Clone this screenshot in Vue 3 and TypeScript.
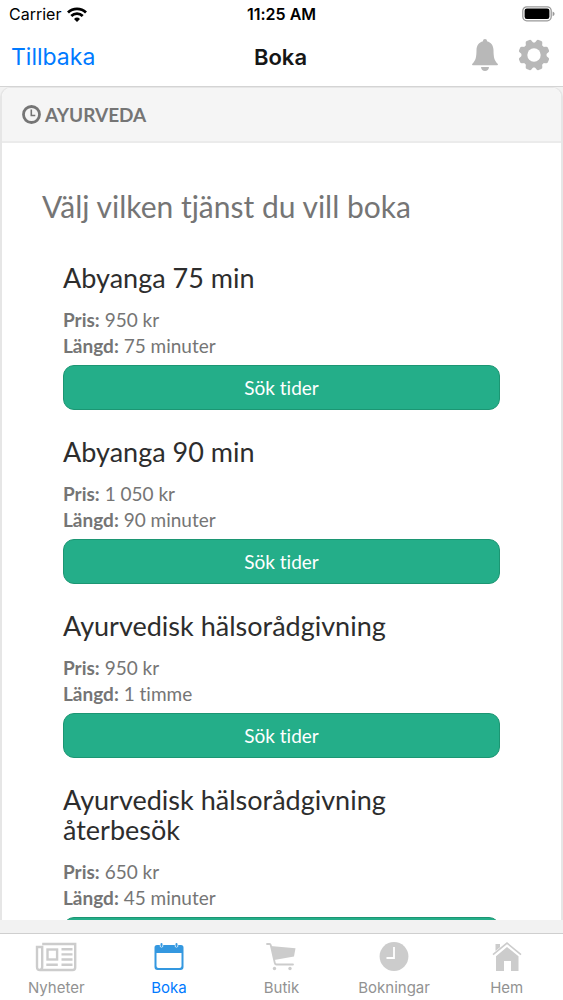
<script setup lang="ts">
interface Service {
  name: string
  price: string
  duration: string
}

interface Tab {
  id: string
  label: string
  active?: boolean
}

const services: Service[] = [
  { name: 'Abyanga 75 min', price: '950 kr', duration: '75 minuter' },
  { name: 'Abyanga 90 min', price: '1 050 kr', duration: '90 minuter' },
  { name: 'Ayurvedisk hälsorådgivning', price: '950 kr', duration: '1 timme' },
  { name: 'Ayurvedisk hälsorådgivning återbesök', price: '650 kr', duration: '45 minuter' },
]

const tabs: Tab[] = [
  { id: 'news', label: 'Nyheter' },
  { id: 'book', label: 'Boka', active: true },
  { id: 'shop', label: 'Butik' },
  { id: 'bookings', label: 'Bokningar' },
  { id: 'home', label: 'Hem' },
]
</script>

<template>
  <div class="screen">
    <div class="status">
      <div class="carrier">
        <span>Carrier</span>
        <svg width="20" height="15" viewBox="0 0 20 15" fill="none" stroke="#000" stroke-width="2.800">
          <path d="M1 5.400a13 13 0 0 1 18 0" />
          <path d="M4.300 9a8.200 8.200 0 0 1 11.400 0" />
          <path d="M10 15l-3-3a4.400 4.400 0 0 1 6 0z" fill="#000" stroke="none" />
        </svg>
      </div>
      <span class="time">11:25 AM</span>
      <svg class="battery" width="33" height="16" viewBox="0 0 33 16">
        <rect x="0.8" y="0.8" width="28.4" height="14" rx="4" fill="none" stroke="#999" stroke-width="1.3" />
        <rect x="2.6" y="2.6" width="24.8" height="10.4" rx="2.2" fill="#000" />
        <path d="M30.6 5.4c2.6.8 2.6 4 0 4.8z" fill="#999" />
      </svg>
    </div>

    <header class="nav">
      <a class="back" href="#">Tillbaka</a>
      <h1>Boka</h1>
      <div class="actions">
        <button type="button" aria-label="Aviseringar">
          <svg width="26" height="32" viewBox="0 0 26 32" fill="#b8b8b8">
            <path d="M13 0c-1.300 0-2 .9-2 2.200C7 3.200 4.600 6.500 4.500 11c-.1 7-.6 10.300-4.100 13.700-.7.800-.4 1.500.5 1.500h24.200c.9 0 1.200-.7.500-1.500-3.500-3.400-4-6.700-4.100-13.700-.1-4.500-2.500-7.800-6.500-8.800C15 .9 14.300 0 13 0z" />
            <path d="M9 28h8c-.2 2.400-1.800 4-4 4s-3.800-1.600-4-4z" />
          </svg>
        </button>
        <button type="button" aria-label="Inställningar">
          <svg width="32" height="32" viewBox="-16 -16 32 32">
            <g fill="#b8b8b8">
              <path
                v-for="n in 8"
                :key="n"
                :transform="`rotate(${n * 45 + 22.5})`"
                d="M-5 -8L-3.200 -14Q-2.800 -15.700 -1.400 -15.600H1.400Q2.800 -15.700 3.200 -14L5 -8z"
              />
              <circle r="12.600" />
            </g>
            <circle r="6.700" fill="#fff" />
          </svg>
        </button>
      </div>
    </header>

    <main class="content">
      <section class="panel">
        <h2 class="panel-head">
          <svg width="20" height="20" viewBox="0 0 20 20" fill="none" stroke="#757575">
            <circle cx="9.500" cy="9.500" r="8" stroke-width="2.800" />
            <path d="M9.300 4.500v6h4" stroke-width="1.600" />
          </svg>
          <span>AYURVEDA</span>
        </h2>
        <div class="panel-body">
          <p class="lead">Välj vilken tjänst du vill boka</p>
          <ul class="services">
            <li v-for="service in services" :key="service.name">
              <h3>{{ service.name }}</h3>
              <p><strong>Pris:</strong> {{ service.price }}</p>
              <p><strong>Längd:</strong> {{ service.duration }}</p>
              <button class="search" type="button">Sök tider</button>
            </li>
          </ul>
        </div>
      </section>
    </main>

    <nav class="tabs">
      <a v-for="tab in tabs" :key="tab.id" href="#" class="tab" :class="{ active: tab.active }">
        <svg v-if="tab.id === 'news'" width="42" height="30" viewBox="0 0 42 30" fill="none" stroke="#ccc" stroke-width="2.400">
          <path d="M7.200 2h33v23.500q0 2.500-2.500 2.500H5Q2 28 2 25V5H7.200v20q0 3-2.600 3" />
          <rect x="12.500" y="7.500" width="9.600" height="10" />
          <path d="M26.500 7.200h11M26.500 12.400h11M26.500 17.500h11M11.300 22.800h11.500M26.500 22.800h11" />
        </svg>
        <svg v-else-if="tab.id === 'book'" width="30" height="30" viewBox="0 0 30 30" fill="#3498e0">
          <path fill-rule="evenodd" d="M3 3h2.800v1.500q1.700 2 3.400 0V3h11.600v1.500q1.700 2 3.400 0V3H27q2.500 0 2.500 2.500V25q0 3-3 3h-23q-3 0-3-3V5.500Q.5 3 3 3zM2.500 11v13q0 2 2 2h21q2 0 2-2V11z" />
          <rect x="6.500" y="1" width="2" height="4" rx="1" />
          <rect x="21.500" y="1" width="2" height="4" rx="1" />
        </svg>
        <svg v-else-if="tab.id === 'shop'" width="30" height="30" viewBox="0 0 30 30" fill="#ccc">
          <path d="M4.500 4l25 2.200L28 14.500 8.200 18z" />
          <path d="M1 2h2.500q1 0 1.300 1.200L8.800 21q.3 1.500 1.800 1.500H27" fill="none" stroke="#ccc" stroke-width="1.800" stroke-linecap="round" />
          <circle cx="8.500" cy="26.500" r="1.700" />
          <circle cx="24" cy="26.500" r="1.700" />
        </svg>
        <svg v-else-if="tab.id === 'bookings'" width="30" height="30" viewBox="0 0 30 30">
          <circle cx="15" cy="14.500" r="14.400" fill="#ccc" />
          <path d="M15 5v11H7.500" fill="none" stroke="#fff" stroke-width="1.800" />
        </svg>
        <svg v-else width="30" height="30" viewBox="0 0 30 30" fill="#ccc">
          <path d="M4 14.300L15 5 26.500 14.300V29H19V19h-7v10H4z" />
          <path d="M1 12.600L15 1.100l14 11.500" fill="none" stroke="#ccc" stroke-width="1.600" />
          <path d="M3.500 2H8v3.200l-4.500 3.800z" />
        </svg>
        <span>{{ tab.label }}</span>
      </a>
    </nav>
  </div>
</template>

<style>
body {
  margin: 0;
}
</style>

<style scoped>
.screen {
  display: flex;
  flex-direction: column;
  height: 100vh;
  background: #f2f2f2;
  color: #757575;
  font-family: Lato, sans-serif;
  font-size: 19px;
  font-variant-ligatures: none;
  line-height: 26px;
}

h1,
h2,
h3,
p,
ul {
  margin: 0;
  padding: 0;
}

button {
  font: inherit;
  font-variant-ligatures: none;
  cursor: pointer;
}

a {
  text-decoration: none;
}

svg {
  display: block;
  flex: none;
}

.status,
.nav {
  display: grid;
  grid-template-columns: 1fr auto 1fr;
  align-items: center;
  flex: none;
  background: #fff;
  font-family: Inter, sans-serif;
}

.status {
  height: 28px;
  padding: 0 8px;
  color: #000;
  font-size: 16px;
}

.carrier {
  display: flex;
  align-items: center;
  gap: 6px;
  padding-left: 1px;
}

.time {
  font-weight: 600;
}

.battery {
  justify-self: end;
}

.nav {
  height: 58px;
  padding: 0 13px 0 11px;
  border-bottom: 1px solid #d4d4d4;
}

.back {
  color: #007aff;
  font-size: 23px;
}

.nav h1 {
  color: #161616;
  font-size: 22px;
  font-weight: 600;
}

.actions {
  display: flex;
  justify-content: flex-end;
  gap: 20px;
  padding-bottom: 4px;
}

.actions button {
  padding: 0;
  border: 0;
  background: none;
}

.content {
  flex: 1;
  min-height: 0;
  margin-bottom: 13px;
  overflow-y: auto;
  scrollbar-width: none;
}

.panel {
  overflow: hidden;
  border: 2px solid #e6e6e6;
  border-top-width: 1px;
  border-radius: 10px;
  background: #fff;
}

.panel-head {
  display: flex;
  align-items: center;
  gap: 3px;
  height: 53px;
  padding-left: 20px;
  border-bottom: 2px solid #ebebeb;
  background: #f5f5f5;
  font-size: 19px;
  font-weight: 700;
}

.panel-body {
  padding: 43px 40px;
}

.lead {
  font-size: 30px;
  line-height: 40px;
}

.services {
  display: flex;
  flex-direction: column;
  gap: 27px;
  padding: 37px 21px 0;
  list-style: none;
}

.services h3 {
  margin-bottom: 14px;
  color: #2d2d2d;
  font-size: 27px;
  font-weight: 400;
  line-height: 30px;
}

.search {
  display: block;
  width: 100%;
  height: 45px;
  margin-top: 6px;
  border: 1px solid #1c9673;
  border-radius: 11px;
  background: #24ae89;
  color: #fff;
}

.tabs {
  display: grid;
  grid-template-columns: repeat(5, 1fr);
  flex: none;
  height: 66px;
  border-top: 1px solid #cfcfcf;
  background: #fff;
  font-family: Inter, sans-serif;
  font-size: 15px;
  line-height: 20px;
}

.tab {
  display: flex;
  flex-direction: column;
  align-items: center;
  gap: 6px;
  padding-top: 8px;
  color: #929292;
}

.tab.active {
  color: #007aff;
}
</style>
